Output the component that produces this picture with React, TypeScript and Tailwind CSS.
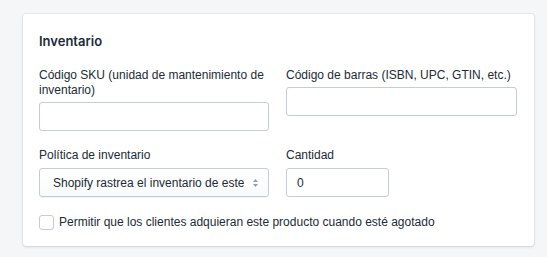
import React from "react";

export default function App() {
  const font = { fontFamily: "'Liberation Sans', Arial, sans-serif" };
  return (
    <div className="w-[547px] h-[257px] bg-[#f4f6f8] pt-[14px] pl-[23px]" style={font}>
      <div className="w-[511px] h-[232px] bg-white rounded-[3px] shadow-[0_0_0_1px_rgba(63,63,68,0.05),0_1px_3px_0_rgba(63,63,68,0.15)] px-4 pt-[18px] text-[#212b36]">
        <h2 className="text-[13px] leading-[18px] font-semibold" style={{ fontFamily: "Inter, 'Liberation Sans', sans-serif" }}>Inventario</h2>
        <div className="grid grid-cols-[230px_231px] gap-x-[17px] mt-[18px]">
          <div className="flex flex-col">
            <label className="text-[12px] leading-[15px]">Código SKU (unidad de mantenimiento de inventario)</label>
            <input className="mt-[4px] h-[29px] border border-[#c4cdd5] rounded-[3px] outline-none" />
          </div>
          <div className="flex flex-col">
            <label className="text-[12px] leading-[15px]">Código de barras (ISBN, UPC, GTIN, etc.)</label>
            <input className="mt-[4px] h-[29px] border border-[#c4cdd5] rounded-[3px] outline-none" />
          </div>
        </div>
        <div className="grid grid-cols-[230px_103px] gap-x-[17px] mt-[17px]">
          <div className="flex flex-col">
            <label className="text-[12px] leading-[15px]">Política de inventario</label>
            <div className="mt-[5px] h-[29px] border border-[#c4cdd5] rounded-[3px] bg-gradient-to-b from-white to-[#f9fafb] flex items-center pl-[13px] pr-[9px] shadow-[0_1px_0_rgba(22,29,37,0.05)]">
              <span className="text-[12px] flex-1 whitespace-nowrap overflow-hidden">Shopify rastrea el inventario de este</span>
              <svg width="7" height="10" viewBox="0 0 7 10" className="ml-2 shrink-0">
                <path d="M3.5 1 L6 4 H1 Z" fill="#919eab" />
                <path d="M3.5 9 L6 6 H1 Z" fill="#919eab" />
              </svg>
            </div>
          </div>
          <div className="flex flex-col">
            <label className="text-[12px] leading-[15px]">Cantidad</label>
            <div className="mt-[5px] h-[29px] border border-[#c4cdd5] rounded-[3px] flex items-center pl-[10px] text-[12px]">0</div>
          </div>
        </div>
        <div className="flex items-center mt-[18px]">
          <div className="w-[15px] h-[15px] border border-[#c4cdd5] rounded-[3px] bg-white shrink-0" />
          <span className="ml-[5px] text-[12px] leading-[15px]">Permitir que los clientes adquieran este producto cuando esté agotado</span>
        </div>
      </div>
    </div>
  );
}
